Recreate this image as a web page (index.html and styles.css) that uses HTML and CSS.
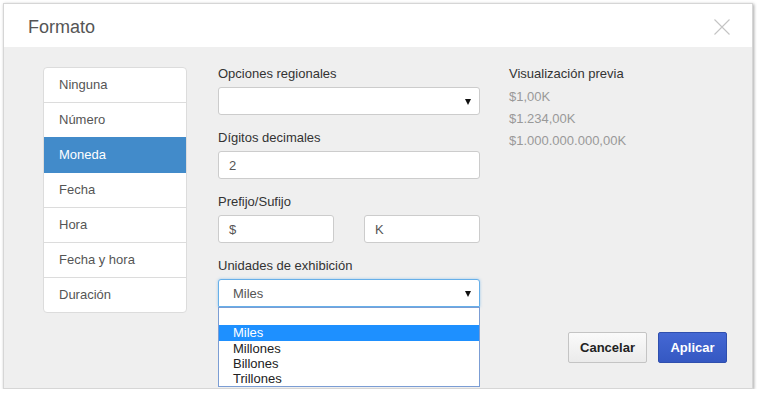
FILE: index.html
```html
<!DOCTYPE html>
<html lang="es">
<head>
<meta charset="utf-8">
<title>Formato</title>
<link rel="stylesheet" href="styles.css">
</head>
<body>
<div class="dialog">
  <div class="header">
    <div class="title">Formato</div>
    <svg class="close" width="16" height="16" viewBox="0 0 16 16"><path d="M0.5 0.5 L15.5 15.5 M15.5 0.5 L0.5 15.5" stroke="#c4c4c4" stroke-width="1.1" fill="none"/></svg>
  </div>
  <div class="body">
    <ul class="list">
      <li class="item">Ninguna</li>
      <li class="item">Número</li>
      <li class="item active">Moneda</li>
      <li class="item">Fecha</li>
      <li class="item">Hora</li>
      <li class="item">Fecha y hora</li>
      <li class="item">Duración</li>
    </ul>
    <div class="form">
      <div class="group">
        <div class="label">Opciones regionales</div>
        <div class="select"><span></span><span class="arrow"></span></div>
      </div>
      <div class="group">
        <div class="label">Dígitos decimales</div>
        <div class="input">2</div>
      </div>
      <div class="group">
        <div class="label">Prefijo/Sufijo</div>
        <div class="pair">
          <div class="input half">$</div>
          <div class="input half">K</div>
        </div>
      </div>
      <div class="group">
        <div class="label">Unidades de exhibición</div>
        <div class="select-wrap">
          <div class="select focused"><span class="sel-text">Miles</span><span class="arrow"></span></div>
          <ul class="popup">
            <li class="opt blank"></li>
            <li class="opt hl">Miles</li>
            <li class="opt">Millones</li>
            <li class="opt">Billones</li>
            <li class="opt">Trillones</li>
          </ul>
        </div>
      </div>
    </div>
    <div class="side">
      <div class="preview">
        <div class="label">Visualización previa</div>
        <div class="pv">$1,00K</div>
        <div class="pv">$1.234,00K</div>
        <div class="pv">$1.000.000.000,00K</div>
      </div>
      <div class="actions">
        <button class="btn cancel">Cancelar</button>
        <button class="btn apply">Aplicar</button>
      </div>
    </div>
  </div>
</div>
</body>
</html>
```

FILE: styles.css
```css
* { box-sizing: border-box; }
html, body { margin: 0; padding: 0; background: #ffffff; }
body {
  font-family: "Liberation Sans", Arial, sans-serif;
  font-size: 13px;
  color: #333;
}
.dialog {
  margin: 3px 0 0 3px;
  width: 750px;
  height: 386px;
  border: 1px solid #d6d6d6;
  box-shadow: 1px 1px 3px rgba(0,0,0,0.35);
  display: flex;
  flex-direction: column;
  background: #efefef;
}
.header {
  height: 43px;
  background: #fff;
  display: flex;
  align-items: flex-start;
  padding: 12px 22px 0 24px;
  flex: none;
}
.title {
  font-size: 18px;
  line-height: 22px;
  color: #555;
}
.close { margin-left: auto; margin-top: 3px; }
.body {
  flex: 1;
  display: flex;
  padding: 20px 25px 25px 39px;
}
.list {
  list-style: none;
  margin: 0;
  padding: 0;
  width: 144px;
  align-self: flex-start;
  background: #fff;
  border: 1px solid #dcdcdc;
  border-radius: 4px;
  overflow: hidden;
}
.item {
  height: 35px;
  line-height: 34px;
  padding-left: 15px;
  color: #555;
  border-top: 1px solid #dcdcdc;
}
.item:first-child { border-top: none; height: 34px; }
.item.active {
  background: #428bca;
  color: #fff;
  border-top-color: #428bca;
}
.item.active + .item { border-top-color: #428bca; height: 35px; }
.form {
  width: 262px;
  margin-left: 31px;
  margin-top: -2px;
}
.label {
  line-height: 18px;
  margin-bottom: 4px;
  color: #333;
}
.group { margin-bottom: 14px; }
.select, .input {
  height: 28px;
  background: #fff;
  border: 1px solid #ccc;
  border-radius: 3px;
  display: flex;
  align-items: center;
  color: #555;
}
.input { padding-left: 10px; }
.select {
  justify-content: space-between;
  padding: 0 8px 0 14px;
}
.arrow {
  width: 0;
  height: 0;
  border-left: 3px solid transparent;
  border-right: 3px solid transparent;
  border-top: 6px solid #111;
  margin-top: 1px;
}
.pair { display: flex; justify-content: space-between; }
.half { width: 116px; }
.select-wrap { position: relative; }
.select.focused {
  border-color: #66afe9;
  box-shadow: 0 0 3px rgba(102,175,233,0.6);
  border-bottom-left-radius: 0;
  border-bottom-right-radius: 0;
}
.popup {
  position: absolute;
  left: 0;
  top: 28px;
  width: 262px;
  margin: 0;
  padding: 0;
  list-style: none;
  background: #fff;
  border: 1px solid #7b9dd4;
}
.opt {
  height: 15px;
  line-height: 15px;
  padding-left: 14px;
  color: #222;
}
.opt.blank { height: 17px; }
.opt.hl { height: 16px; line-height: 16px; background: #1e90ff; color: #fff; }
.side {
  flex: 1;
  margin-left: 29px;
  margin-top: -2px;
  display: flex;
  flex-direction: column;
}
.preview .label { margin-bottom: 3px; }
.pv { line-height: 22px; color: #999; }
.actions {
  margin-top: auto;
  display: flex;
  justify-content: flex-end;
  gap: 11px;
}
.btn {
  height: 31px;
  font-family: "Liberation Sans", Arial, sans-serif;
  font-size: 13px;
  font-weight: bold;
  border-radius: 2px;
  padding: 0;
}
.cancel {
  width: 79px;
  color: #222;
  background: linear-gradient(#fafafa, #ebebeb);
  border: 1px solid #c4c4c4;
}
.apply {
  width: 69px;
  color: #fff;
  background: linear-gradient(#4468d4, #3558c2);
  border: 1px solid #2f4fae;
}
```
